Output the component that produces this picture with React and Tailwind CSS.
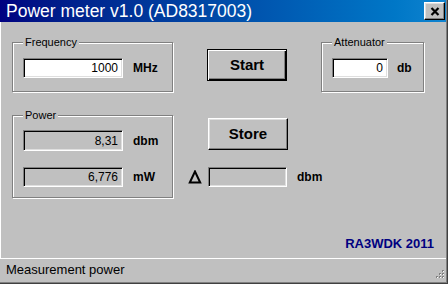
import React from 'react';

const sunken =
  'border border-t-[#808080] border-l-[#808080] border-b-white border-r-white shadow-[inset_1px_1px_0_#000,inset_-1px_-1px_0_#dfdfdf]';
const raised =
  'border border-t-white border-l-white border-b-black border-r-black shadow-[inset_-1px_-1px_0_#808080,inset_1px_1px_0_#dfdfdf] bg-[#c0c0c0]';

const GroupBox = ({ label, className, children }) => (
  <div
    className={`relative border border-[#808080] shadow-[inset_1px_1px_0_#fff,1px_1px_0_#fff] ${className}`}
  >
    <span className="absolute left-[10px] top-[-8px] bg-[#c0c0c0] px-[2px] text-[11px] leading-[14px] text-black">
      {label}
    </span>
    {children}
  </div>
);

const Field = ({ value, readOnly, className }) => (
  <div
    className={`${sunken} ${readOnly ? 'bg-[#c0c0c0]' : 'bg-white'} flex items-center justify-end pr-[4px] text-[12px] leading-none text-black ${className}`}
  >
    {value}
  </div>
);

const App = () => {
  return (
    <div
      className="w-[448px] h-[284px] bg-[#c0c0c0] flex flex-col shadow-[inset_-1px_-1px_0_#404040,inset_-2px_-2px_0_#808080] overflow-hidden"
      style={{ fontFamily: '"Liberation Sans", Arial, sans-serif' }}
    >
      {/* title bar */}
      <div className="h-[22px] mr-[2px] flex items-center bg-gradient-to-r from-[#000080] to-[#1084d0] pl-[6px] pr-[1px]">
        <span className="flex-1 text-white text-[17.5px] leading-none pt-[1px]">
          Power meter v1.0 (AD8317003)
        </span>
        <button className={`${raised} w-[21px] h-[18px] flex items-center justify-center`}>
          <svg width="10" height="9" viewBox="0 0 10 9">
            <path d="M1.5 1L8.5 8M8.5 1L1.5 8" stroke="#000" strokeWidth="2.2" />
          </svg>
        </button>
      </div>

      {/* body */}
      <div className="flex-1 flex flex-col pl-[12px] pr-[14px] border-l border-white">
        <div className="flex items-start mt-[20px] -ml-[1px]">
          <GroupBox label="Frequency" className="w-[161px] h-[50px] flex items-center pl-[10px] pt-[1px]">
            <Field value="1000" className="w-[100px] h-[20px]" />
            <span className="ml-[10px] text-[12px] font-bold text-black">MHz</span>
          </GroupBox>
          <button
            className="ml-[34px] mt-[7px] w-[80px] h-[32px] border border-black bg-[#c0c0c0] shadow-[inset_1px_1px_0_#fff,inset_-1px_-1px_0_#000,inset_-2px_-2px_0_#808080] text-[15px] font-bold text-black"
          >
            Start
          </button>
          <GroupBox label="Attenuator" className="ml-[34px] w-[103px] h-[50px] flex items-center pl-[10px] pt-[1px]">
            <Field value="0" className="w-[56px] h-[20px]" />
            <span className="ml-[9px] text-[12px] font-bold text-black">db</span>
          </GroupBox>
        </div>

        <div className="flex items-start mt-[23px] -ml-[1px]">
          <GroupBox label="Power" className="w-[161px] h-[83px] flex flex-col pl-[10px] pt-[14px]">
            <div className="flex items-center">
              <Field value="8,31" readOnly className="w-[100px] h-[21px]" />
              <span className="ml-[10px] text-[12px] font-bold text-black">dbm</span>
            </div>
            <div className="flex items-center mt-[16px]">
              <Field value="6,776" readOnly className="w-[100px] h-[20px]" />
              <span className="ml-[10px] text-[12px] font-bold text-black">mW</span>
            </div>
          </GroupBox>
          <div className="ml-[15px] flex flex-col">
            <button className={`${raised} ml-[20px] mt-[3px] w-[80px] h-[32px] text-[15px] font-bold text-black`}>
              Store
            </button>
            <div className="flex items-center mt-[17px]">
              <svg width="20" height="14" viewBox="0 0 20 14" className="shrink-0">
                <path d="M7 1.5L1.8 12.5H12.2Z" fill="none" stroke="#000" strokeWidth="2" strokeLinejoin="miter" />
              </svg>
              <Field readOnly value="" className="w-[79px] h-[20px]" />
              <span className="ml-[10px] text-[12px] font-bold text-black">dbm</span>
            </div>
          </div>
        </div>

        <div className="mt-auto mb-[7px] self-end text-[13px] font-bold text-[#000080] leading-[15px]">
          RA3WDK 2011
        </div>
      </div>

      {/* status bar */}
      <div className="h-[24px] shrink-0 mr-[2px] mb-[2px] border-t border-white flex items-start justify-between pl-[6px] pt-[3px]">
        <span className="text-[13px] leading-[15px] text-black">Measurement power</span>
        <svg width="12" height="12" viewBox="0 0 12 12" className="shrink-0 mt-[8px] mr-[1px]">
          <rect x="9" y="0" width="2" height="2" fill="#808080" />
          <rect x="6" y="3" width="2" height="2" fill="#808080" />
          <rect x="9" y="3" width="2" height="2" fill="#808080" />
          <rect x="3" y="6" width="2" height="2" fill="#808080" />
          <rect x="6" y="6" width="2" height="2" fill="#808080" />
          <rect x="9" y="6" width="2" height="2" fill="#808080" />
          <rect x="10" y="1" width="1" height="1" fill="#fff" />
          <rect x="7" y="4" width="1" height="1" fill="#fff" />
          <rect x="10" y="4" width="1" height="1" fill="#fff" />
          <rect x="4" y="7" width="1" height="1" fill="#fff" />
          <rect x="7" y="7" width="1" height="1" fill="#fff" />
          <rect x="10" y="7" width="1" height="1" fill="#fff" />
        </svg>
      </div>
    </div>
  );
};

export default App;
